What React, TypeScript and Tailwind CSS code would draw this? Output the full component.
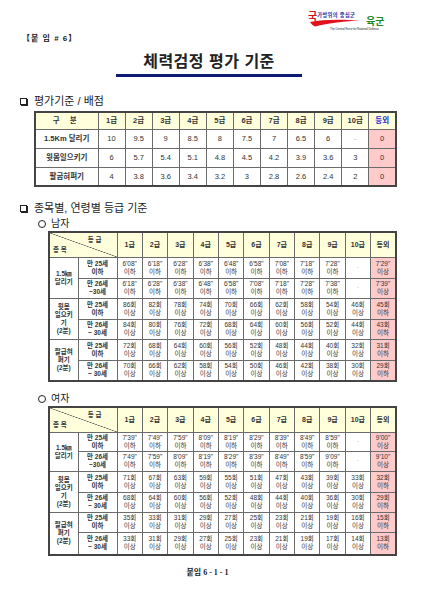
import React from 'react';

// grade labels shared by all tables
const grades = ['1급', '2급', '3급', '4급', '5급', '6급', '7급', '8급', '9급', '10급'];

const scoreRows = [
  { name: '1.5Km 달리기', vals: ['10', '9.5', '9', '8.5', '8', '7.5', '7', '6.5', '6', '-', '0'] },
  { name: '윗몸일으키기', vals: ['6', '5.7', '5.4', '5.1', '4.8', '4.5', '4.2', '3.9', '3.6', '3', '0'] },
  { name: '팔굽혀펴기', vals: ['4', '3.8', '3.6', '3.4', '3.2', '3', '2.8', '2.6', '2.4', '2', '0'] },
];

interface AgeRow {
  age: [string, string];
  vals: string[];
  last: string;
  h: string;
}

interface Group {
  name: string[];
  rows: AgeRow[];
}

const times = (list: string[]) => list.map((t) => t + '"');
const counts = (list: number[]) => list.map((n) => n + '회');

const maleGroups: Group[] = [
  {
    name: ['1.5㎞', '달리기'],
    rows: [
      { age: ['만 25세', '이하'], vals: [...times(["6'08", "6'18", "6'28", "6'38", "6'48", "6'58", "7'08", "7'18", "7'28"]), ''], last: "7'29\"", h: 'h-[21px]' },
      { age: ['만 26세', '~30세'], vals: [...times(["6'18", "6'28", "6'38", "6'48", "6'58", "7'08", "7'18", "7'28", "7'38"]), ''], last: "7'39\"", h: 'h-[20px]' },
    ],
  },
  {
    name: ['윗몸', '일으키', '기', '(2분)'],
    rows: [
      { age: ['만 25세', '이하'], vals: counts([86, 82, 78, 74, 70, 66, 62, 58, 54, 46]), last: '45회', h: 'h-[21px]' },
      { age: ['만 26세', '~ 30세'], vals: counts([84, 80, 76, 72, 68, 64, 60, 56, 52, 44]), last: '43회', h: 'h-[20px]' },
    ],
  },
  {
    name: ['팔굽혀', '펴기', '(2분)'],
    rows: [
      { age: ['만 25세', '이하'], vals: counts([72, 68, 64, 60, 56, 52, 48, 44, 40, 32]), last: '31회', h: 'h-[21px]' },
      { age: ['만 26세', '~ 30세'], vals: counts([70, 66, 62, 58, 54, 50, 46, 42, 38, 30]), last: '29회', h: 'h-[21px]' },
    ],
  },
];

const femaleGroups: Group[] = [
  {
    name: ['1.5㎞', '달리기'],
    rows: [
      { age: ['만 25세', '이하'], vals: [...times(["7'39", "7'49", "7'59", "8'09", "8'19", "8'29", "8'39", "8'49", "8'59"]), ''], last: "9'00\"", h: 'h-[19px]' },
      { age: ['만 26세', '~30세'], vals: [...times(["7'49", "7'59", "8'09", "8'19", "8'29", "8'39", "8'49", "8'59", "9'09"]), ''], last: "9'10\"", h: 'h-[20px]' },
    ],
  },
  {
    name: ['윗몸', '일으키', '기', '(2분)'],
    rows: [
      { age: ['만 25세', '이하'], vals: counts([71, 67, 63, 59, 55, 51, 47, 43, 39, 33]), last: '32회', h: 'h-[21px]' },
      { age: ['만 26세', '~ 30세'], vals: counts([68, 64, 60, 56, 52, 48, 44, 40, 36, 30]), last: '29회', h: 'h-[20px]' },
    ],
  },
  {
    name: ['팔굽혀', '펴기', '(2분)'],
    rows: [
      { age: ['만 25세', '이하'], vals: counts([35, 33, 31, 29, 27, 25, 23, 21, 19, 16]), last: '15회', h: 'h-[20px]' },
      { age: ['만 26세', '~ 30세'], vals: counts([33, 31, 29, 27, 25, 23, 21, 19, 17, 14]), last: '13회', h: 'h-[23px]' },
    ],
  },
];

const Box = () => (
  <span className="inline-block w-[7px] h-[7px] border border-[#222] shadow-[1px_1px_0_#222] mr-[7px]" />
);

const Circle = () => (
  <span className="inline-block w-[8px] h-[8px] rounded-full border-[1.5px] border-[#222] mr-[5px]" />
);

// army logo: red brush swoosh, blue motto, green 육군, tiny english line
const Logo = () => (
  <div className="w-[82px]">
    <div className="flex items-end h-[15px]">
      <div className="relative w-[56px] h-[15px]">
        <svg width="56" height="15" viewBox="0 0 56 15" className="absolute left-0 top-0">
          <path d="M2 10 C 14 7.5, 32 7, 52 8.5 C 38 9, 20 11, 7 14.5 C 5 13.5, 3.5 12, 2 10 Z" fill="#e2121c" />
        </svg>
        <div className="relative flex items-end leading-none">
          <span className="text-[10px] font-bold text-[#d8141c]">국</span>
          <span className="text-[5.2px] font-bold text-[#1c2fa8] tracking-[0.4px] mb-[4px]">가방위의 중심군</span>
        </div>
      </div>
      <span className="ml-[2px] text-[10px] leading-none font-bold text-[#1e8a2a]">육군</span>
    </div>
    <div className="mt-[1px] ml-[22px] text-[2.8px] text-[#111] leading-none whitespace-nowrap">
      The Central Force for National Defense
    </div>
  </div>
);

const cellB = 'border border-[#6b6b6b]';

const TwoLine = ({ a, b }: { a: string; b: string }) => (
  <div className="leading-[8px]">
    <div>{a}</div>
    <div>{b}</div>
  </div>
);

const GradeTable = ({ groups, header }: { groups: Group[]; header: string }) => (
  <table className="table-fixed border-collapse border-2 border-[#444] w-[349px] text-[6.5px] text-[#333]">
    <colgroup>
      <col className="w-[29px]" />
      <col className="w-[39px]" />
      {Array.from({ length: 11 }).map((_, i) => (
        <col key={i} />
      ))}
    </colgroup>
    <thead>
      <tr className={header}>
        <td
          colSpan={2}
          className={`${cellB} bg-[#ffffdc] p-0 bg-[linear-gradient(to_top_right,transparent_calc(50%-0.6px),#555_50%,transparent_calc(50%+0.6px))]`}
        >
          <div className="flex flex-col justify-between h-full px-[3px] py-[2px] text-[6.5px] font-bold">
            <span className="self-end mr-[12px]">등 급</span>
            <span className="self-start">종 목</span>
          </div>
        </td>
        {grades.map((g) => (
          <td key={g} className={`${cellB} bg-[#ffffdc] text-center font-bold text-[7px]`}>
            {g}
          </td>
        ))}
        <td className={`${cellB} bg-[#ffffdc] text-center font-bold text-[7px]`}>등외</td>
      </tr>
    </thead>
    <tbody>
      {groups.map((g) =>
        g.rows.map((r, ri) => (
          <tr key={g.name[0] + ri} className={r.h}>
            {ri === 0 && (
              <td rowSpan={2} className={`${cellB} text-center text-[6.5px] leading-[8px] font-semibold`}>
                {g.name.map((n) => (
                  <div key={n}>{n}</div>
                ))}
              </td>
            )}
            <td className={`${cellB} text-center font-semibold`}>
              <TwoLine a={r.age[0]} b={r.age[1]} />
            </td>
            {r.vals.map((v, vi) => (
              <td key={vi} className={`${cellB} text-center p-0`}>
                {v === '' ? (
                  <span className="text-[#aaa]">·</span>
                ) : (
                  <TwoLine a={v} b={v.endsWith('"') ? '이하' : '이상'} />
                )}
              </td>
            ))}
            <td className={`${cellB} text-center bg-[#ffcaca] p-0`}>
              <TwoLine a={r.last} b={r.last.endsWith('"') ? '이상' : '이하'} />
            </td>
          </tr>
        ))
      )}
    </tbody>
  </table>
);

export default function App() {
  return (
    <div className="w-[429px] h-[601px] bg-white text-[#222] font-['Liberation_Sans','Noto_Sans_CJK_KR',sans-serif] overflow-hidden">
      {/* top line: attachment label + logo */}
      <div className="flex justify-between items-start h-[52px]">
        <div className="pl-[22px] pt-[33px] text-[8px] font-bold tracking-[1px]">【붙 임 # 6】</div>
        <div className="pr-[39px] pt-[12px]">
          <Logo />
        </div>
      </div>

      {/* title */}
      <div className="ml-[116px] w-[186px]">
        <div className="text-center text-[16px] leading-[20px] font-bold tracking-[0.5px]">체력검정 평가 기준</div>
        <div className="mt-[2px] h-[3px] bg-[#0c1a78]" />
      </div>

      <div className="pl-[20px] mt-[17px] flex items-center text-[11px] leading-[14px] h-[14px]">
        <Box />
        평가기준 / 배점
      </div>

      <div className="pl-[34px] mt-[3px]">
        <table className="table-fixed border-collapse border-2 border-[#444] w-[363px] text-[7.5px] text-[#333]">
          <colgroup>
            <col className="w-[63px]" />
            {Array.from({ length: 11 }).map((_, i) => (
              <col key={i} />
            ))}
          </colgroup>
          <thead>
            <tr className="h-[17px]">
              <td className={`${cellB} bg-[#ffffdc] text-center font-bold tracking-[4px]`}>구 분</td>
              {grades.map((g) => (
                <td key={g} className={`${cellB} bg-[#ffffdc] text-center font-bold`}>
                  {g}
                </td>
              ))}
              <td className={`${cellB} bg-[#ffffdc] text-center font-bold text-[#2323d0]`}>등외</td>
            </tr>
          </thead>
          <tbody>
            {scoreRows.map((r) => (
              <tr key={r.name} className="h-[19px]">
                <td className={`${cellB} text-center font-semibold`}>{r.name}</td>
                {r.vals.map((v, i) => (
                  <td
                    key={i}
                    className={`${cellB} text-center ${i === 10 ? 'bg-[#ffcaca]' : ''} ${v === '-' ? 'text-[#aaa]' : ''}`}
                  >
                    {v}
                  </td>
                ))}
              </tr>
            ))}
          </tbody>
        </table>
      </div>

      <div className="pl-[20px] mt-[14px] flex items-center text-[11px] leading-[14px] h-[14px]">
        <Box />
        종목별, 연령별 등급 기준
      </div>
      <div className="pl-[38px] mt-[2px] flex items-center text-[10px] leading-[14px] h-[14px]">
        <Circle />
        남자
      </div>
      <div className="pl-[48px]">
        <GradeTable groups={maleGroups} header="h-[22px]" />
      </div>

      <div className="pl-[38px] mt-[10px] flex items-center text-[10px] leading-[14px] h-[14px]">
        <Circle />
        여자
      </div>
      <div className="pl-[48px]">
        <GradeTable groups={femaleGroups} header="h-[23px]" />
      </div>

      <div className="mt-[11px] pr-[14px] text-center text-[8px] font-bold font-['Liberation_Serif','Noto_Sans_CJK_KR',serif]">
        붙임 6 - 1 - 1
      </div>
    </div>
  );
}
